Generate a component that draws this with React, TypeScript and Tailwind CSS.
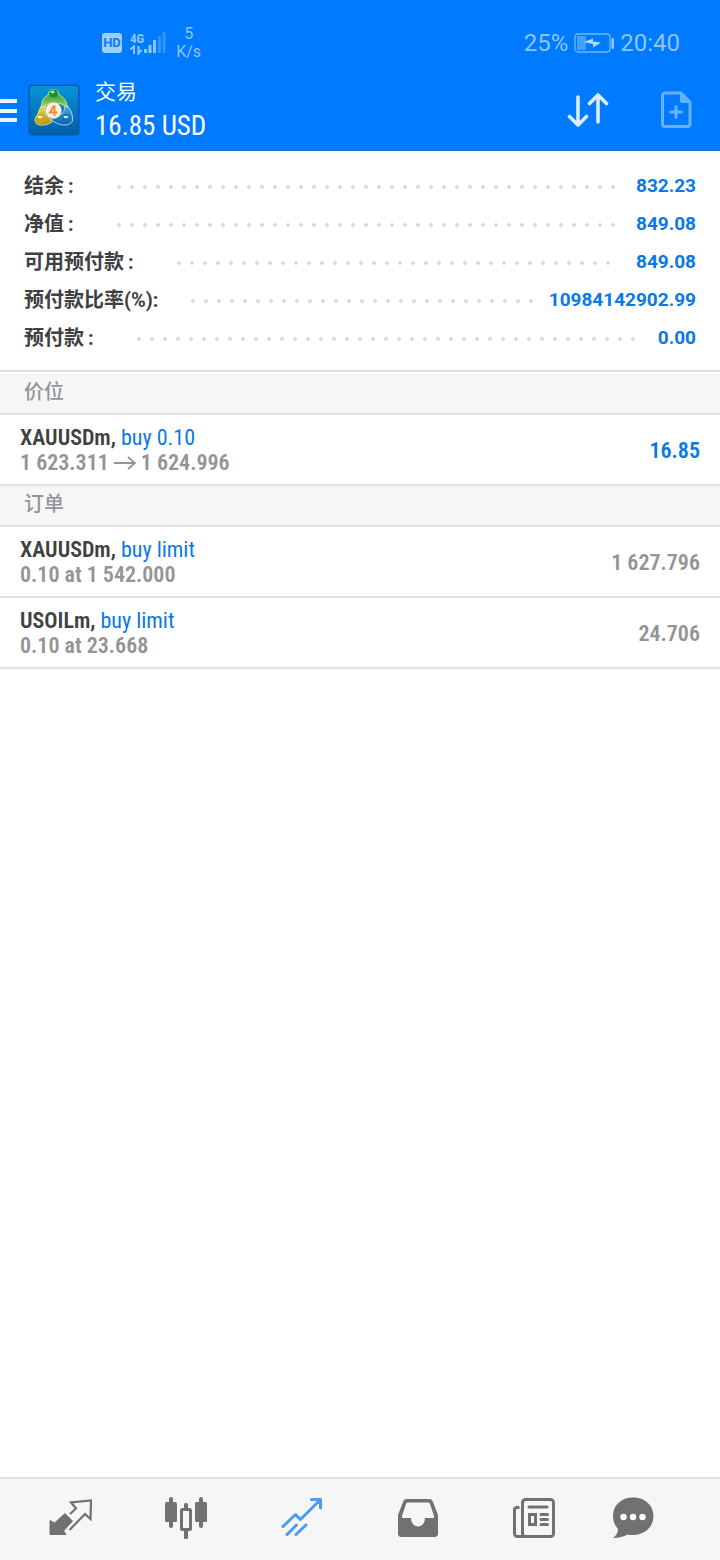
import type { ReactNode } from "react";

const balances = [
  { label: "结余", value: "832.23", gap: "mr-[17px]" },
  { label: "净值", value: "849.08", gap: "mr-[17px]" },
  { label: "可用预付款", value: "849.08", gap: "mr-[17px]" },
  { label: "预付款比率(%)", value: "10984142902.99", gap: "mr-3", tight: true },
  { label: "预付款", value: "0.00", gap: "mr-[17px]" },
];

function StatusBar() {
  return (
    <div className="flex h-[76px] items-center justify-between pt-2.5 pr-10 pl-[102px] text-[#8cc6ff]">
      <div className="flex items-center">
        <span className="flex h-5 w-5 items-center justify-center rounded-[3px] bg-[#9ccfff] text-[13px] font-bold text-[#0a7cf5]">
          HD
        </span>
        <div className="ml-2 flex items-end">
          <div className="flex flex-col">
            <span className="font-['Roboto_Condensed','Liberation_Sans_Narrow','Roboto',sans-serif] text-[13px] leading-3 font-bold">
              4G
            </span>
            <svg className="h-[10px] w-[14px]" viewBox="0 0 14 10" fill="none" stroke="currentColor" strokeWidth="2">
              <path d="M0.500 4.500 4 1.500V9M8.500 1v7.500l3-3.500" />
            </svg>
          </div>
          <svg className="h-6 w-[22px]" viewBox="0 0 22 24" fill="currentColor">
            <rect x="0" y="18" width="3" height="4" />
            <rect x="4.500" y="14" width="3" height="8" />
            <rect x="9" y="9" width="3" height="13" />
            <rect x="14" y="5" width="3" height="17" opacity="0.35" />
            <rect x="18.500" y="1" width="3" height="21" opacity="0.35" />
          </svg>
        </div>
        <div className="ml-2.5 flex flex-col text-center text-[16px] leading-[18px]">
          <span>5</span>
          <span>K/s</span>
        </div>
      </div>
      <div className="flex items-center gap-1.5 text-2xl leading-7">
        <span>25%</span>
        <svg className="h-5 w-10" viewBox="0 0 40 20" fill="none">
          <rect x="1" y="1" width="35" height="18" rx="3" stroke="currentColor" strokeWidth="1.300" opacity="0.8" />
          <rect x="3" y="3" width="9" height="14" fill="currentColor" opacity="0.5" />
          <path d="m10 9 9-3.500v3l8 1-8 5v-3.500z" fill="#b5dcff" />
          <rect x="37.400" y="5" width="2.600" height="11" rx="1" fill="currentColor" />
        </svg>
        <span>20:40</span>
      </div>
    </div>
  );
}

function Logo() {
  return (
    <svg className="h-[52px] w-[52px]" viewBox="0 0 52 52">
      <defs>
        <linearGradient id="tile" x1="0" y1="0" x2="0" y2="1">
          <stop offset="0" stopColor="#0794d8" />
          <stop offset="1" stopColor="#055fa6" />
        </linearGradient>
        <linearGradient id="green" x1="0" y1="0" x2="0" y2="1">
          <stop offset="0" stopColor="#178a30" />
          <stop offset="1" stopColor="#a3d95e" />
        </linearGradient>
        <linearGradient id="gold" x1="0" y1="0" x2="0" y2="1">
          <stop offset="0" stopColor="#f2e04f" />
          <stop offset="1" stopColor="#b0900c" />
        </linearGradient>
        <linearGradient id="sky" x1="0" y1="0" x2="0" y2="1">
          <stop offset="0" stopColor="#55b4ec" />
          <stop offset="1" stopColor="#0a62b0" />
        </linearGradient>
      </defs>
      <rect x="0.500" y="0.500" width="51" height="51" rx="4" fill="#0a58b0" />
      <rect x="2" y="2" width="48" height="48" rx="3" fill="url(#tile)" />
      <g strokeWidth="0.800" strokeLinejoin="round">
        <path d="M36 19c6 4 9 10 8.500 18-3 6-14 5-21-1l4-5c5 1 9-2 9-7z" fill="url(#sky)" stroke="#c9e8fb" />
        <path d="M15 20c-3 3-4 6-5 10-4 4-4 9 0 10.500 5 1.500 10 0 14-2.500l-3-5c-4-1-5-6-3-12z" fill="url(#gold)" stroke="#f0ecb8" />
        <path d="M13.500 24c0-7 2-11 6.500-12.500 0-8 10.500-8 11-.5 4 1.500 8 6 8.500 12.500-4-3-8-4.500-12-4-5-.5-10 .5-14 4.500z" fill="url(#green)" stroke="#d3efbd" />
      </g>
      <circle cx="25.500" cy="9.500" r="4" fill="#159032" />
      <circle cx="12.500" cy="35" r="4.500" fill="#c9a913" />
      <circle cx="38.500" cy="34.500" r="4.500" fill="#1170bd" />
      <ellipse cx="24.500" cy="8" rx="2.200" ry="1.200" fill="#b9e8a0" />
      <ellipse cx="12" cy="33" rx="2.500" ry="1.300" fill="#fff7b5" />
      <ellipse cx="38" cy="33" rx="2.500" ry="1.300" fill="#c9eaff" />
      <circle cx="25.500" cy="26.500" r="8" fill="#fff3e6" stroke="#cdbb9f" strokeWidth="0.600" />
      <path d="M26.500 21.500v10.500M26 21.500l-4 7h7.500" fill="none" stroke="#f28c34" strokeWidth="2" />
    </svg>
  );
}

function Toolbar() {
  return (
    <div className="flex h-[75px] items-center border-b border-[#1b70cf] pr-7 pb-1.5">
      <button aria-label="菜单" className="mr-[11px]">
        <svg className="h-[26px] w-[17px]" viewBox="0 0 17 26" fill="#e9f5ff">
          <rect y="2" width="17" height="4" />
          <rect y="12" width="17" height="4" />
          <rect y="21" width="17" height="4" />
        </svg>
      </button>
      <Logo />
      <div className="ml-[15px] flex flex-1 flex-col text-white">
        <h1 className="text-[21px] leading-8">交易</h1>
        <span className="font-['Roboto_Condensed','Liberation_Sans_Narrow','Roboto',sans-serif] text-[27px] leading-9">
          16.85 USD
        </span>
      </div>
      <button aria-label="排序" className="mr-[51px]">
        <svg className="h-9 w-[42px]" viewBox="0 0 42 36" fill="none" stroke="#d9edff" strokeWidth="3.600" strokeLinecap="round" strokeLinejoin="round">
          <path d="M11 5v28M2.500 24.500l8.500 8.500 8.500-8.500M31 30V3M22.500 11.500 31 3l8.500 8.500" />
        </svg>
      </button>
      <button aria-label="新订单">
        <svg className="h-[38px] w-8" viewBox="0 0 32 38" fill="none" stroke="#66b2ff" strokeWidth="3">
          <path d="M5 2h16l9 9v22a2.500 2.500 0 0 1-2.500 2.500H5A2.500 2.500 0 0 1 2.500 33V4.500A2.500 2.500 0 0 1 5 2z" />
          <path d="M20 2v8a2 2 0 0 0 2 2h8z" fill="#66b2ff" stroke="none" />
          <path d="M16 15.500v11M10.500 21h11" strokeLinecap="round" />
        </svg>
      </button>
    </div>
  );
}

function SectionTitle({ children }: { children: ReactNode }) {
  return (
    <h2 className="border-b-2 border-[#e2e2e2] bg-[#f6f6f6] px-6 pt-0.5 pb-[5px] text-[20px] leading-8 font-medium text-[#929497]">
      {children}
    </h2>
  );
}

type RowProps = { symbol: string; action: string; detail: ReactNode; value: string; accent?: boolean };

function Row({ symbol, action, detail, value, accent }: RowProps) {
  return (
    <li className="flex items-center justify-between border-b-2 border-[#e2e2e2] px-5 pt-2.5 pb-[9px] font-['Roboto_Condensed','Liberation_Sans_Narrow','Roboto','Noto_Sans_CJK_SC',sans-serif] text-[22px] leading-[25px] font-semibold text-[#929497]">
      <div>
        <div className="text-[#3f4042]">
          {symbol}, <span className="font-normal text-[#0a78e6]">{action}</span>
        </div>
        <div className="flex items-center">{detail}</div>
      </div>
      <span className={accent ? "text-[#0a78e6]" : ""}>{value}</span>
    </li>
  );
}

function TabBar() {
  return (
    <nav className="grid h-[83px] grid-cols-[116fr_116fr_116fr_116fr_116fr_82fr] items-center justify-items-center border-t-2 border-[#e0e0e0] bg-[#f6f6f6] pr-[46px] pb-1 pl-3 text-[#717171]">
      <button aria-label="行情">
        <svg className="h-11 w-11" viewBox="0 0 44 44" fill="none" stroke="currentColor">
          <path d="M2 24.500 6.500 27 17 17.500l7.500 7.500-9 10 2.500 3.500H2z" fill="currentColor" strokeWidth="1" strokeLinejoin="round" />
          <path d="m22 18 6-5.500-5-6 20-2-.5 18.500-5.500-5-15.500 16" strokeWidth="2.200" />
        </svg>
      </button>
      <button aria-label="图表">
        <svg className="h-11 w-11" viewBox="0 0 44 44" fill="currentColor">
          <rect x="1" y="6" width="12" height="20" rx="1.500" />
          <rect x="5" y="1" width="4" height="31" rx="2" />
          <rect x="31" y="6" width="12" height="20" rx="1.500" />
          <rect x="35" y="1" width="4" height="31" rx="2" />
          <rect x="20" y="7" width="4" height="6" rx="1.500" />
          <rect x="20" y="33" width="4" height="10" rx="1.500" />
          <rect x="17.500" y="13.500" width="9" height="20" rx="1" fill="none" stroke="currentColor" strokeWidth="3" />
        </svg>
      </button>
      <button aria-label="交易" className="text-[#4c9cf5]">
        <svg className="h-11 w-11" viewBox="0 0 44 44" fill="none" stroke="currentColor" strokeWidth="3" strokeLinecap="round" strokeLinejoin="round">
          <path d="M3 30.500 15.500 18.500l5 5L40 4M31.500 3.500H40.500V12M7 38.500l9.500-9.500M16 38.500l10-9.500" />
        </svg>
      </button>
      <button aria-label="历史">
        <svg className="h-11 w-11" viewBox="0 0 44 44" fill="currentColor" fillRule="evenodd">
          <path d="M11 3h22c2 0 3 .8 3.800 2.500L42 19v18.500c0 2-1 3.500-3.500 3.500h-33C3 41 2 39.500 2 37.500V19L7.200 5.500C8 3.800 9 3 11 3zm1 3.500c-1 0-1.500.5-2 1.500L6 20v2h9c0 5 3 8.500 7 8.500s7-3.500 7-8.500h9v-2L34 8c-.5-1-1-1.500-2-1.500z" />
        </svg>
      </button>
      <button aria-label="新闻">
        <svg className="h-11 w-11" viewBox="0 0 44 44" fill="none" stroke="currentColor" strokeWidth="3">
          <rect x="10.500" y="3.500" width="31" height="37" rx="3" />
          <path d="M7.500 11.500H5A2.500 2.500 0 0 0 2.500 14v23.500A3 3 0 0 0 5.500 40.500H14" />
          <path d="M17 11h18M29 18.500h6.500M29 23.500h6.500M29 28.500h6.500" strokeLinecap="round" />
          <rect x="17.500" y="18.500" width="6" height="10" />
        </svg>
      </button>
      <button aria-label="消息">
        <svg className="h-11 w-11" viewBox="0 0 44 44">
          <path d="M22 1.500C33.500 1.500 42.500 9 42.500 20S33.500 39 22 39c-2 0-4-.2-5.500-.6C13 40.500 8 42 2 42c3.500-2.500 4.800-5.500 5-9C3.800 29.500 2 25 2 20 2 9 10.500 1.500 22 1.500z" fill="currentColor" />
          <circle cx="12.500" cy="21" r="3.200" fill="#fff" />
          <circle cx="22" cy="21" r="3.200" fill="#fff" />
          <circle cx="31.500" cy="21" r="3.200" fill="#fff" />
        </svg>
      </button>
    </nav>
  );
}

export default function App() {
  return (
    <div className="flex min-h-screen flex-col bg-white font-['Roboto','Noto_Sans_CJK_SC',sans-serif]">
      <header className="bg-[#007aff]">
        <StatusBar />
        <Toolbar />
      </header>
      <main className="flex-1">
        <dl className="border-b-2 border-[#e2e2e2] px-6 pt-4 pb-[13px] text-[20px] leading-[38px]">
          {balances.map((b) => (
            <div key={b.label} className="flex items-center">
              <dt className="font-bold text-[#3f4042]">
                {b.label}
                <span className={b.tight ? "" : "inline-block w-5 pl-1"}>:</span>
              </dt>
              <div
                className={`mt-0.5 ml-[33px] h-1 flex-1 bg-[radial-gradient(circle_at_2px_2px,#dcdcdc_1.6px,transparent_2.2px)] bg-[length:13px_4px] ${b.gap}`}
              />
              <dd className="text-[19px] font-bold text-[#0a78e6]">{b.value}</dd>
            </div>
          ))}
        </dl>
        <section className="pt-0.5">
          <SectionTitle>价位</SectionTitle>
          <ul>
            <Row
              symbol="XAUUSDm"
              action="buy 0.10"
              detail={
                <>
                  1 623.311
                  <svg className="mx-[5px] h-4 w-[22px]" viewBox="0 0 22 16" fill="none" stroke="currentColor" strokeWidth="1.800">
                    <path d="M0 8h21M14 2l7 6-7 6" />
                  </svg>
                  1 624.996
                </>
              }
              value="16.85"
              accent
            />
          </ul>
        </section>
        <section>
          <SectionTitle>订单</SectionTitle>
          <ul>
            <Row symbol="XAUUSDm" action="buy limit" detail="0.10 at 1 542.000" value="1 627.796" />
            <Row symbol="USOILm" action="buy limit" detail="0.10 at 23.668" value="24.706" />
          </ul>
        </section>
      </main>
      <TabBar />
    </div>
  );
}
